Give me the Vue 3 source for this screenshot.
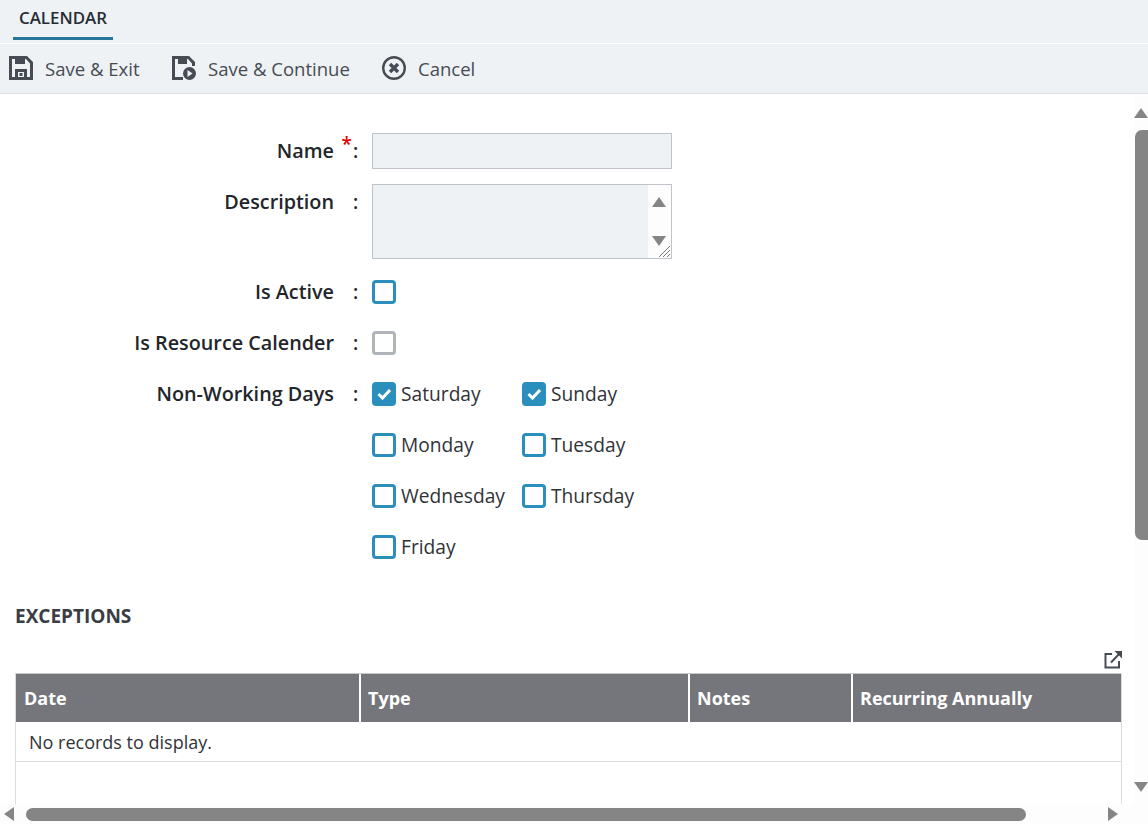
<template>
  <div class="page">
    <div class="tabs">
      <div class="tab">CALENDAR</div>
    </div>
    <div class="toolbar">
      <button v-for="a in actions" :key="a.label" type="button" class="action" :class="a.cls">
        <svg v-if="a.icon === 'save'" width="26" height="26" viewBox="0 0 26 26">
          <path fill="#474c54" fill-rule="evenodd" d="M1 1h18l6 6v18H1zM4 4v18h3v-8h12v8h3V8.5L18 4h-1v5H7V4zM10 17v5h6v-5z" />
          <rect x="11.5" y="18" width="3" height="3" fill="#474c54" />
        </svg>
        <svg v-else-if="a.icon === 'continue'" width="26" height="26" viewBox="0 0 26 26">
          <path fill="#474c54" fill-rule="evenodd" d="M1 1h17l6 6v4h-3V8.5L17 4h-1v5H7V4H4v18h8v3H1z" />
          <circle cx="18.5" cy="18.5" r="6.5" fill="#474c54" />
          <path fill="#eef2f5" d="M16.5 15l5 3.5-5 3.5z" />
        </svg>
        <svg v-else width="26" height="26" viewBox="0 0 26 26">
          <circle cx="13" cy="13" r="10.8" fill="none" stroke="#474c54" stroke-width="2.4" />
          <path fill="none" stroke="#474c54" stroke-width="3.4" d="M9 9l8 8M17 9l-8 8" />
        </svg>
        <span>{{ a.label }}</span>
      </button>
    </div>

    <div class="body">
      <div class="content">
        <form class="form" @submit.prevent>
          <div class="label">Name<span class="req">*</span></div>
          <div class="colon">:</div>
          <input class="input" type="text" />

          <div class="label">Description</div>
          <div class="colon">:</div>
          <div class="textarea">
            <div class="ta-bar">
              <i class="tri up"></i>
              <i class="tri down"></i>
              <svg class="grip" width="14" height="14" viewBox="0 0 14 14">
                <path fill="none" stroke="#777" stroke-width="1" d="M2 13L13 2M6 13l7-7M10 13l3-3" />
              </svg>
            </div>
          </div>

          <div class="label">Is Active</div>
          <div class="colon">:</div>
          <div class="check-cell"><span class="box"></span></div>

          <div class="label">Is Resource Calender</div>
          <div class="colon">:</div>
          <div class="check-cell"><span class="box off"></span></div>

          <div class="label">Non-Working Days</div>
          <div class="colon">:</div>
          <div class="days">
            <label v-for="d in days" :key="d.name" class="day">
              <span class="box" :class="{ on: d.on }">
                <svg v-if="d.on" width="16" height="14" viewBox="0 0 16 14">
                  <path fill="none" stroke="#fff" stroke-width="3" d="M2.5 7l4 4L14 3" />
                </svg>
              </span>
              <span class="day-name">{{ d.name }}</span>
            </label>
          </div>
        </form>

        <h2 class="section">EXCEPTIONS</h2>

        <div class="popout">
          <svg width="18" height="18" viewBox="0 0 18 18">
            <path fill="none" stroke="#474c54" stroke-width="2" d="M8 3H1.5v13.5H15V10" />
            <path fill="none" stroke="#474c54" stroke-width="2" d="M7 11.5L16 2" />
            <path fill="#474c54" d="M10.5 0H18v7.5z" />
          </svg>
        </div>

        <div class="grid">
          <div class="grid-head">
            <div v-for="c in columns" :key="c.name" class="th" :style="{ width: c.width + 'px' }">{{ c.name }}</div>
          </div>
          <div class="empty">No records to display.</div>
        </div>
      </div>

      <!-- fake scrollbars -->
      <div class="vbar">
        <i class="tri up"></i>
        <div class="vthumb"></div>
        <i class="tri down vdown"></i>
      </div>
      <div class="hbar">
        <i class="tri left"></i>
        <div class="hthumb"></div>
        <i class="tri right"></i>
      </div>
    </div>
  </div>
</template>

<script setup>
const actions = [
  { label: 'Save & Exit', icon: 'save', cls: 'a1' },
  { label: 'Save & Continue', icon: 'continue', cls: 'a2' },
  { label: 'Cancel', icon: 'cancel', cls: 'a3' },
]

const days = [
  { name: 'Saturday', on: true },
  { name: 'Sunday', on: true },
  { name: 'Monday', on: false },
  { name: 'Tuesday', on: false },
  { name: 'Wednesday', on: false },
  { name: 'Thursday', on: false },
  { name: 'Friday', on: false },
]

const columns = [
  { name: 'Date', width: 345 },
  { name: 'Type', width: 329 },
  { name: 'Notes', width: 163 },
  { name: 'Recurring Annually', width: 268 },
]
</script>

<style>
html, body {
  margin: 0;
  overflow: hidden;
}
</style>

<style scoped>
.page {
  width: 1148px;
  height: 824px;
  display: flex;
  flex-direction: column;
  overflow: hidden;
  background: #fff;
  font-family: "Open Sans", "Liberation Sans", sans-serif;
  color: #2f3338;
}

.tabs {
  height: 43px;
  flex: none;
  padding-left: 13px;
  background: #eef2f5;
  border-bottom: 1px solid #fff;
}

.tab {
  width: 100px;
  height: 37px;
  border-bottom: 3px solid #27769c;
  text-align: center;
  font-size: 16.9px;
  font-weight: 600;
  line-height: 36px;
  color: #262b36;
}

.toolbar {
  height: 49px;
  flex: none;
  display: flex;
  align-items: center;
  background: #eef2f5;
  border-bottom: 1px solid #dcdfe3;
  padding-left: 8px;
}

.action {
  display: flex;
  align-items: center;
  gap: 11px;
  padding: 0;
  border: 0;
  background: none;
  font: inherit;
  font-size: 18.55px;
  color: #474c54;
}

.action svg {
  margin-bottom: 2px;
}

.a1 { width: 163px; }
.a2 { width: 210px; }

.body {
  flex: 1;
  position: relative;
  overflow: hidden;
}

.content {
  padding: 39px 26px 0 15px;
}

.form {
  display: grid;
  grid-template-columns: 319px 38px 300px;
  align-items: start;
  justify-content: start;
  row-gap: 15px;
}

.label {
  position: relative;
  text-align: right;
  font-size: 19.8px;
  font-weight: 600;
  color: #22262b;
  line-height: 36px;
}

.colon {
  padding-left: 19px;
  font-size: 19px;
  font-weight: 600;
  line-height: 36px;
  color: #22262b;
}

.req {
  position: absolute;
  top: -7px;
  right: -18px;
  font-size: 19px;
  color: #e60000;
}

.input {
  display: block;
  box-sizing: border-box;
  width: 300px;
  height: 36px;
  margin: 0;
  padding: 0;
  background: #eef2f5;
  border: 1px solid #bfc4cb;
  outline: 0;
}

.textarea {
  box-sizing: border-box;
  width: 300px;
  height: 75px;
  display: flex;
  justify-content: flex-end;
  background: #eef2f5;
  border: 1px solid #bfc4cb;
}

.ta-bar {
  position: relative;
  width: 23px;
  background: #fdfdfd;
}

.ta-bar .up {
  position: absolute;
  top: 12px;
  left: 4px;
}

.ta-bar .down {
  position: absolute;
  top: 51px;
  left: 4px;
}

.grip {
  position: absolute;
  right: 0;
  bottom: 0;
}

.tri {
  display: block;
  width: 0;
  height: 0;
  border-style: solid;
  border-color: transparent;
}

.tri.up {
  border-width: 0 7px 10px;
  border-bottom-color: #858585;
}

.tri.down {
  border-width: 10px 7px 0;
  border-top-color: #858585;
}

.tri.left {
  border-width: 7px 10px 7px 0;
  border-right-color: #858585;
}

.tri.right {
  border-width: 7px 0 7px 10px;
  border-left-color: #858585;
}

.check-cell {
  height: 36px;
  display: flex;
  align-items: center;
}

.box {
  box-sizing: border-box;
  width: 24px;
  height: 24px;
  flex: none;
  display: flex;
  align-items: center;
  justify-content: center;
  background: #fff;
  border: 3px solid #2a8fbd;
  border-radius: 4px;
}

.box.off {
  border-color: #b0b5bb;
}

.box.on {
  background: #2a8fbd;
}

.days {
  display: grid;
  grid-template-columns: 150px 150px;
  grid-auto-rows: 36px;
  row-gap: 15px;
}

.day {
  display: flex;
  align-items: center;
  gap: 5px;
  font-size: 19.2px;
  color: #2f3338;
  white-space: nowrap;
}

.day-name {
  margin-bottom: 2px;
}

.section {
  margin: 38px 0 0;
  font-size: 19px;
  font-weight: 700;
  line-height: 26px;
  color: #3a3e44;
}

.popout {
  display: flex;
  justify-content: flex-end;
  margin-top: 22px;
  height: 22px;
}

.grid {
  border-left: 1px solid #dcdcdc;
  border-right: 1px solid #dcdcdc;
  height: 140px;
}

.grid-head {
  display: flex;
  height: 49px;
  background: #75767b;
  border-top: 1px solid #c9c9c9;
  box-sizing: border-box;
}

.th {
  box-sizing: border-box;
  padding-left: 8px;
  border-right: 2px solid #fff;
  font-size: 18px;
  font-weight: 700;
  line-height: 49px;
  color: #fff;
}

.th + .th {
  padding-left: 7px;
}

.th:last-child {
  border-right: 0;
}

.empty {
  height: 39px;
  padding-left: 13px;
  border-bottom: 1px solid #dcdcdc;
  font-size: 18px;
  line-height: 40px;
  color: #2f3338;
}

.vbar {
  position: absolute;
  top: 0;
  right: 0;
  bottom: 20px;
  width: 14px;
  padding-top: 14px;
  background: #fdfdfd;
}

.vthumb {
  width: 13px;
  height: 410px;
  margin-top: 12px;
  margin-left: 1px;
  border-radius: 7px 0 0 7px;
  background: #858585;
}

.vdown {
  position: absolute;
  top: 688px;
}

.hbar {
  position: absolute;
  left: 0;
  right: 0;
  bottom: 0;
  height: 20px;
  display: flex;
  align-items: center;
  background: #fdfdfd;
}

.hbar .left {
  margin-left: 4px;
}

.hthumb {
  width: 1000px;
  height: 13px;
  margin-left: 12px;
  border-radius: 7px;
  background: #858585;
}

.hbar .right {
  margin-left: 82px;
}
</style>
